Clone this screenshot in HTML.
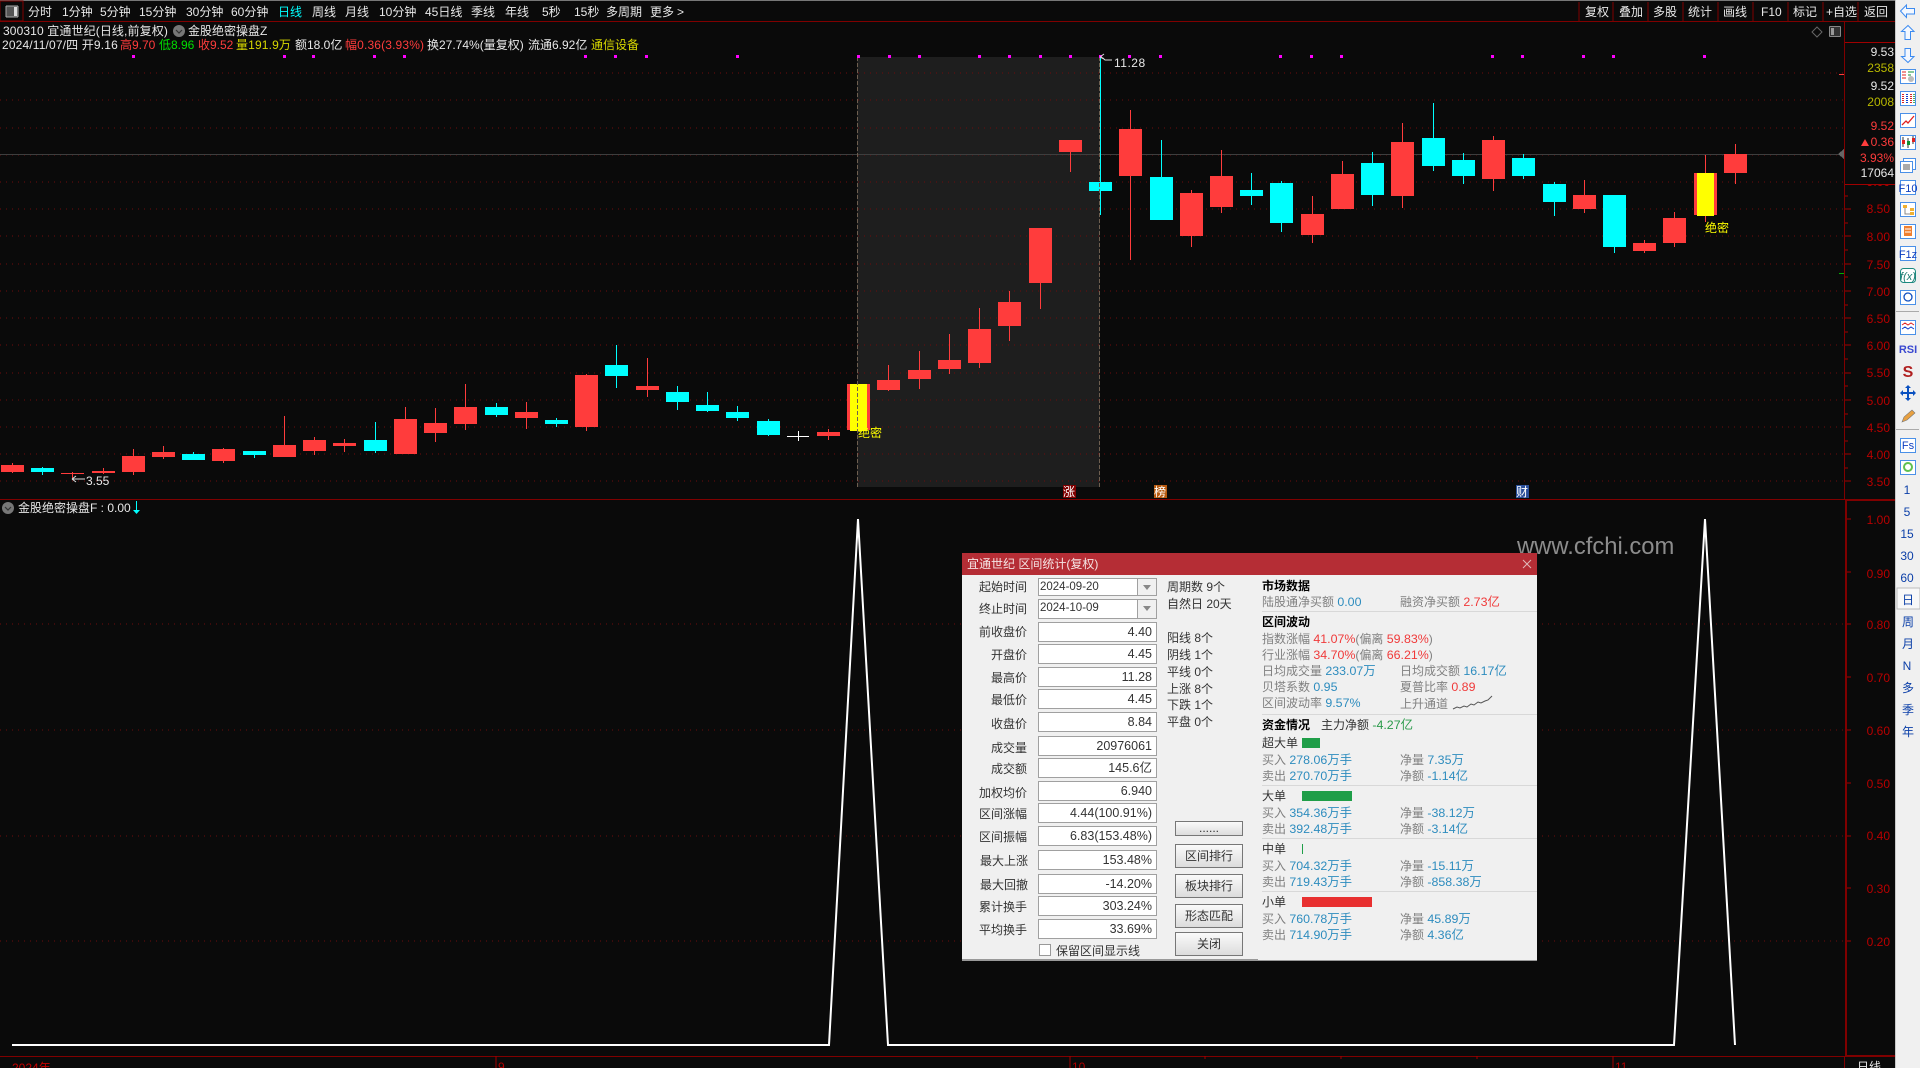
<!DOCTYPE html>
<html lang="zh"><head><meta charset="utf-8"><title>区间统计</title>
<style>
html,body{margin:0;padding:0;background:#0a0a0a;width:1920px;height:1068px;overflow:hidden}
#c{position:absolute;left:0;top:0}
#c text{font-family:"Liberation Sans","WenQuanYi Zen Hei","Noto Sans CJK SC",sans-serif;font-size:12px}
.w{fill:#e8e8e8}.r{fill:#ff3c3c}.g{fill:#00e000}.y{fill:#d8d800}
.ax text{fill:#b80000;text-anchor:end}
.ov text{text-anchor:end}
.m{text-anchor:middle}
.ls{letter-spacing:.15px}
.sb text{font-family:"Liberation Sans","Noto Sans CJK SC",sans-serif;font-size:13px;fill:#0b3fa8;text-anchor:middle}
#d{position:absolute;left:962px;top:553px;width:575px;height:408px;background:#f0f0f0;border-bottom:1px solid #999;box-sizing:border-box;font:12px/16px "Liberation Sans","Noto Sans CJK SC",sans-serif;color:#333;overflow:hidden}
#d div,#d span.a{position:absolute;white-space:nowrap}
.ttl{left:0;top:0;width:575px;height:22px;background:#b52d35;color:#f5e4e4;padding-left:5px;line-height:22px;box-sizing:border-box}
.l{width:80px;text-align:right;left:-15px}
.i{left:76px;width:119px;height:20px;background:#fff;border:1px solid #a0a0a0;box-sizing:border-box;text-align:right;padding-right:4px;line-height:19px;font-size:12.5px}
.cb{left:76px;width:119px;background:#fff;border:1px solid #a0a0a0;box-sizing:border-box;padding-left:1px;line-height:17px;font-size:11.5px}
.cb i{position:absolute;right:0;top:0;bottom:0;width:18px;border-left:1px solid #a0a0a0;background:#f0f0f0}
.cb i:after{content:"";position:absolute;left:5px;top:6px;border:4px solid transparent;border-top:5px solid #888}
.b{left:213px;width:68px;text-align:center;border:1px solid #777;box-sizing:border-box;background:linear-gradient(#fafafa,#dcdcdc)}
.h{left:300px;font-weight:bold;color:#000}
.k{color:#808080}.v{color:#2d8cbe;font-size:12.4px}.re{color:#f03a3a;font-size:12.4px}.gr{color:#2a9a4a;font-size:12.4px}
.s{left:300px;width:275px;height:1px;background:#d8d8d8}
.c2{left:438px}.c1{left:300px}
.bar{left:340px;height:10px}
</style></head><body>
<svg id="c" width="1920" height="1068" viewBox="0 0 1920 1068" shape-rendering="crispEdges">
<rect width="1920" height="1068" fill="#0a0a0a"/>
<rect width="1895" height="1" fill="#777"/>
<rect x="857" y="57" width="243" height="430" fill="#1e1e1e"/>
<path d="M0 73H1844M0 100H1844M0 128H1844M0 155H1844M0 182H1844M0 209H1844M0 236H1844M0 264H1844M0 291H1844M0 318H1844M0 345H1844M0 373H1844M0 400H1844M0 427H1844M0 454H1844M0 481H1844M0 624H1844M0 730H1844M0 836H1844M0 941H1844" stroke="#6e0c0c" stroke-width="1" stroke-dasharray="1 5" fill="none"/>
<rect x="0" y="154" width="1840" height="1" fill="#3e3e3e"/>
<path d="M1844 149l-6 5 6 5z" fill="#666"/>
<!-- frame -->
<rect y="21" width="1895" height="1" fill="#800000"/>
<rect y="499" width="1845" height="1" fill="#800000"/>
<rect y="1056" width="1895" height="1" fill="#800000"/>
<rect x="1844" y="21" width="1" height="478" fill="#800000"/>
<rect x="1845" y="499" width="2" height="558" fill="#800000"/>
<rect x="1845" y="499" width="50" height="2" fill="#800000"/>
<rect x="1845" y="1055" width="50" height="2" fill="#800000"/>
<rect x="1844" y="1057" width="1" height="11" fill="#800000"/>
<path d="M1845 73h6M1845 100h6M1845 128h6M1845 155h6M1845 182h6M1845 209h6M1845 236h6M1845 264h6M1845 291h6M1845 318h6M1845 345h6M1845 373h6M1845 400h6M1845 427h6M1845 454h6M1845 481h6M1845 196h3M1845 223h3M1845 250h3M1845 277h3M1845 305h3M1845 332h3M1845 359h3M1845 386h3M1845 414h3M1845 441h3M1845 468h3M1847 519h4M1847 572h4M1847 624h4M1847 677h4M1847 730h4M1847 783h4M1847 836h4M1847 888h4M1847 941h4" stroke="#a00000" stroke-width="1"/>
<rect x="1839" y="74" width="5" height="1" fill="#ff3c3c"/>
<rect x="1839" y="273" width="5" height="1" fill="#00b000"/>
<!-- candles -->
<path fill="#ff3c3c" d="M1 465h23v7h-23zM12 463h1v10h-1zM61 473h23v1h-23zM72 472h1v6h-1zM92 471h23v2h-23zM103 468h1v6h-1zM122 456h23v16h-23zM133 449h1v26h-1zM152 452h23v5h-23zM163 446h1v13h-1zM212 449h23v12h-23zM223 448h1v15h-1zM273 445h23v12h-23zM284 416h1v41h-1zM303 440h23v11h-23zM314 437h1v18h-1zM333 443h23v3h-23zM344 439h1v13h-1zM394 419h23v35h-23zM405 407h1v47h-1zM424 423h23v10h-23zM435 408h1v34h-1zM454 407h23v17h-23zM465 384h1v46h-1zM515 412h23v6h-23zM526 402h1v27h-1zM575 375h23v52h-23zM586 374h1v57h-1zM636 386h23v4h-23zM647 358h1v39h-1zM817 432h23v4h-23zM828 429h1v11h-1zM847 384h23v46h-23zM877 380h23v10h-23zM888 365h1v26h-1zM908 370h23v9h-23zM919 351h1v38h-1zM938 360h23v9h-23zM949 334h1v40h-1zM968 329h23v34h-23zM979 308h1v60h-1zM998 302h23v24h-23zM1009 291h1v50h-1zM1029 228h23v55h-23zM1040 283h1v26h-1zM1059 140h23v12h-23zM1070 152h1v20h-1zM1119 129h23v47h-23zM1130 110h1v150h-1zM1180 193h23v43h-23zM1191 190h1v57h-1zM1210 176h23v31h-23zM1221 150h1v63h-1zM1301 214h23v21h-23zM1312 196h1v47h-1zM1331 174h23v35h-23zM1342 161h1v48h-1zM1391 142h23v54h-23zM1402 123h1v85h-1zM1482 140h23v39h-23zM1493 136h1v55h-1zM1573 195h23v14h-23zM1584 180h1v33h-1zM1633 243h23v8h-23zM1644 240h1v13h-1zM1663 218h23v25h-23zM1674 212h1v35h-1zM1694 173h23v42h-23zM1705 155h1v67h-1zM1724 154h23v19h-23zM1735 144h1v40h-1z"/>
<path fill="#00ffff" d="M31 468h23v4h-23zM42 467h1v8h-1zM182 454h23v6h-23zM193 452h1v8h-1zM243 451h23v4h-23zM254 451h1v7h-1zM364 440h23v11h-23zM375 422h1v31h-1zM485 407h23v8h-23zM496 403h1v14h-1zM545 420h23v4h-23zM556 418h1v9h-1zM605 365h23v11h-23zM616 345h1v43h-1zM666 392h23v10h-23zM677 386h1v24h-1zM696 405h23v6h-23zM707 392h1v20h-1zM726 412h23v6h-23zM737 406h1v15h-1zM757 421h23v14h-23zM768 419h1v17h-1zM1089 182h23v9h-23zM1100 56h1v159h-1zM1150 177h23v43h-23zM1161 140h1v80h-1zM1240 190h23v6h-23zM1251 173h1v32h-1zM1270 183h23v40h-23zM1281 181h1v51h-1zM1361 163h23v32h-23zM1372 152h1v54h-1zM1422 138h23v28h-23zM1433 103h1v68h-1zM1452 160h23v16h-23zM1463 153h1v31h-1zM1512 158h23v18h-23zM1523 154h1v25h-1zM1543 184h23v18h-23zM1554 182h1v34h-1zM1603 195h23v52h-23zM1614 247h1v6h-1z"/>
<path fill="#fff" d="M787 436h22v1h-22zM798 431h1v10h-1z"/>
<path fill="#ffff00" d="M850 384h17v47h-17zM1697 173h17v43h-17z"/>
<path d="M857.5 57V487M1099.5 57V487" stroke="#6e5f50" stroke-width="1" stroke-dasharray="4 2" fill="none"/>
<!-- magenta dots -->
<path fill="#ff00ff" d="M132 55h3v3h-3zM283 55h3v3h-3zM312 55h3v3h-3zM373 55h3v3h-3zM403 55h3v3h-3zM584 55h3v3h-3zM614 55h3v3h-3zM645 55h3v3h-3zM736 55h3v3h-3zM857 55h3v3h-3zM888 55h3v3h-3zM918 55h3v3h-3zM978 55h3v3h-3zM1008 55h3v3h-3zM1039 55h3v3h-3zM1069 55h3v3h-3zM1099 55h3v3h-3zM1128 55h3v3h-3zM1159 55h3v3h-3zM1279 55h3v3h-3zM1310 55h3v3h-3zM1340 55h3v3h-3zM1491 55h3v3h-3zM1521 55h3v3h-3zM1582 55h3v3h-3zM1612 55h3v3h-3zM1703 55h3v3h-3z"/>
<!-- toolbar -->
<rect x="0" y="1" width="23" height="20" fill="none" stroke="#800000"/>
<rect x="6" y="6" width="12" height="11" rx="1" fill="#555" stroke="#aaa"/><rect x="14" y="7" width="3" height="9" fill="#ddd"/>
<g class="w">
<text x="28" y="16">分时</text><text x="62" y="16">1分钟</text><text x="100" y="16">5分钟</text><text x="139" y="16">15分钟</text><text x="186" y="16">30分钟</text><text x="231" y="16">60分钟</text><text x="278" y="16" style="fill:#00ffff">日线</text><text x="312" y="16">周线</text><text x="345" y="16">月线</text><text x="379" y="16">10分钟</text><text x="425" y="16">45日线</text><text x="471" y="16">季线</text><text x="505" y="16">年线</text><text x="542" y="16">5秒</text><text x="574" y="16">15秒</text><text x="606" y="16">多周期</text><text x="650" y="16">更多</text><text x="677" y="16">&gt;</text>
<text x="1585" y="16">复权</text><text x="1619" y="16">叠加</text><text x="1653" y="16">多股</text><text x="1688" y="16">统计</text><text x="1723" y="16">画线</text><text x="1761" y="16">F10</text><text x="1793" y="16">标记</text><text x="1826" y="16">+自选</text><text x="1864" y="16">返回</text>
</g>
<path d="M1579 2v19M1613 2v19M1648 2v19M1683 2v19M1718 2v19M1753 2v19M1788 2v19M1823 2v19M1858 2v19" stroke="#800000" stroke-width="1"/>
<!-- info -->
<text x="3" y="35" class="w" style="letter-spacing:.12px">300310 宜通世纪(日线,前复权)</text>
<circle cx="179" cy="31" r="6" fill="#777" shape-rendering="auto"/><path d="M176 30l3 3 3-3" stroke="#333" fill="none" stroke-width="1.2" shape-rendering="auto"/>
<text x="188" y="35" class="w">金股绝密操盘Z</text>
<text x="2" y="49" class="w ls">2024/11/07/四 开9.16</text>
<text x="120" y="49" class="r">高9.70</text><text x="159" y="49" class="g">低8.96</text><text x="198" y="49" class="r">收9.52</text><text x="236" y="49" class="y ls">量191.9万</text><text x="295" y="49" class="w">额18.0亿</text><text x="345" y="49" class="r ls">幅0.36(3.93%)</text><text x="427" y="49" class="w">换27.74%(量复权)</text><text x="528" y="49" class="w">流通6.92亿</text><text x="591" y="49" class="y">通信设备</text>
<path d="M1817 27l5 5-5 5-5-5z" fill="none" stroke="#666" shape-rendering="auto"/>
<rect x="1829.500" y="26.500" width="11" height="10" rx="1" fill="#333" stroke="#888"/><rect x="1831" y="28" width="3" height="7" fill="#999"/>
<!-- axis -->
<g class="ax">
<text x="1890" y="186">9.00</text><text x="1890" y="213">8.50</text><text x="1890" y="241">8.00</text><text x="1890" y="269">7.50</text><text x="1890" y="296">7.00</text><text x="1890" y="323">6.50</text><text x="1890" y="350">6.00</text><text x="1890" y="377">5.50</text><text x="1890" y="405">5.00</text><text x="1890" y="432">4.50</text><text x="1890" y="459">4.00</text><text x="1890" y="486">3.50</text>
<text x="1890" y="524">1.00</text><text x="1890" y="578">0.90</text><text x="1890" y="629">0.80</text><text x="1890" y="682">0.70</text><text x="1890" y="735">0.60</text><text x="1890" y="788">0.50</text><text x="1890" y="840">0.40</text><text x="1890" y="893">0.30</text><text x="1890" y="946">0.20</text>
</g>
<rect x="1845" y="43" width="50" height="141" fill="#0a0a0a"/>
<rect x="1845" y="42" width="50" height="1" fill="#a00000"/><rect x="1845" y="184" width="50" height="1" fill="#a00000"/>
<g class="ov">
<text x="1894" y="56" class="w">9.53</text><text x="1894" y="72" fill="#b8b800">2358</text><text x="1894" y="90" class="w">9.52</text><text x="1894" y="106" fill="#b8b800">2008</text><text x="1894" y="130" class="r">9.52</text><text x="1894" y="146" class="r">0.36</text><text x="1894" y="162" class="r">3.93%</text><text x="1894" y="177" class="w">17064</text>
</g>
<path d="M1861 146l4-7 4 7z" fill="#ff3c3c" shape-rendering="auto"/>
<!-- marks -->
<path d="M1112 60h-7l-2-2-3-1M1100 57l4-3M1100 57l4 2" stroke="#ddd" fill="none" shape-rendering="auto"/>
<text x="1114" y="67" class="w" style="letter-spacing:.5px">11.28</text>
<path d="M85 479H72M72 479l4-3M72 479l4 3" stroke="#ddd" fill="none" shape-rendering="auto"/>
<text x="86" y="485" class="w">3.55</text>
<text x="858" y="437" fill="#ffff00">绝密</text><text x="1705" y="232" fill="#ffff00">绝密</text>
<rect x="1063" y="485" width="13" height="13" fill="#800000"/><text x="1063" y="496" fill="#fff">涨</text>
<rect x="1154" y="485" width="13" height="13" fill="#b85a10"/><text x="1154" y="496" fill="#fff">榜</text>
<rect x="1516" y="485" width="13" height="13" fill="#2a4f9a"/><text x="1516" y="496" fill="#fff">财</text>
<!-- lower pane -->
<circle cx="8" cy="508" r="6" fill="#777" shape-rendering="auto"/><path d="M5 507l3 3 3-3" stroke="#333" fill="none" stroke-width="1.2" shape-rendering="auto"/>
<text x="18" y="512" class="w">金股绝密操盘F : 0.00</text>
<path d="M136.500 501v10" stroke="#0ff"/><path d="M133 510h7l-3.500 4z" fill="#0ff" shape-rendering="auto"/>
<polyline points="12,1045 829,1045 858,519 888,1045 1674,1045 1705,519 1735,1045" fill="none" stroke="#fff" stroke-width="2" shape-rendering="auto"/>
<text x="1517" y="554" style="font-size:23.8px;font-family:'Liberation Sans',sans-serif" fill="#8c8c8c" shape-rendering="auto">www.cfchi.com</text>
<!-- time axis -->
<path d="M496 1056v12M1070 1056v12M1613 1056v12M1205 1056v3M1341 1056v3M1477 1056v3" stroke="#a00000"/>
<text x="12" y="1072" fill="#c80000">2024年</text><text x="498" y="1071" fill="#b00000">9</text><text x="1072" y="1071" fill="#b00000">10</text><text x="1615" y="1071" fill="#b00000">11</text>
<text x="1857" y="1071" class="w">日线</text>
<!-- sidebar -->
<rect x="1895" y="0" width="25" height="1068" fill="#f0f0f0"/>
<rect x="1895" y="0" width="1" height="1068" fill="#c8c8c8"/>
<g shape-rendering="auto">
<path d="M1900.500 11l6-6v3.500h8v5.500h-8v3.500z M1908 25.500l6 6h-3.500v8h-5.500v-8h-3.500z M1908 62.500l6-6h-3.500v-8h-5.500v8h-3.500z" fill="#f4f8ff" stroke="#3d8bf0"/>
<g fill="#fff" stroke="#4a90e8">
<rect x="1900.500" y="69.500" width="15" height="14"/><rect x="1900.500" y="91.500" width="15" height="14"/><rect x="1900.500" y="113.500" width="15" height="14"/><rect x="1900.500" y="135.500" width="15" height="14"/>
<rect x="1903.500" y="158.500" width="12" height="11"/><rect x="1900.500" y="161.500" width="12" height="11"/>
<rect x="1900.500" y="180.500" width="15" height="14"/><rect x="1900.500" y="202.500" width="15" height="14"/><rect x="1900.500" y="224.500" width="15" height="14"/><rect x="1900.500" y="246.500" width="15" height="14"/>
<rect x="1900.500" y="290.500" width="15" height="14"/><rect x="1900.500" y="320.500" width="15" height="14"/><rect x="1900.500" y="438.500" width="15" height="14"/><rect x="1900.500" y="460.500" width="15" height="14"/>
</g>
<rect x="1900.500" y="268.500" width="15" height="14" rx="3" fill="#fff" stroke="#1a8a80"/>
<path d="M1902 72h4M1902 75h4M1902 78h4" stroke="#e02020"/><path d="M1908 72h6M1908 75h3" stroke="#109030"/><circle cx="1911" cy="79" r="3" fill="#bbb"/>
<path d="M1903 94v9" stroke="#e02020" stroke-width="2" stroke-dasharray="1 1"/><path d="M1907 94v9" stroke="#1040d0" stroke-width="2" stroke-dasharray="1 1"/><path d="M1911 94v9" stroke="#e02020" stroke-width="2" stroke-dasharray="1 1"/><path d="M1914 94v9" stroke="#109030" stroke-width="1.500" stroke-dasharray="1 1"/>
<path d="M1902 125l4-4 2 2 6-7" stroke="#e02020" fill="none" stroke-width="1.300"/>
<path d="M1903 137v10M1908 138v10M1913 136v8" stroke="#333"/><path d="M1902 140h3v4h-3zM1912 138h3v4h-3z" fill="#e02020"/><path d="M1907 141h3v4h-3z" fill="#109030"/>
<path d="M1903 165h7M1903 167h7M1903 169h7" stroke="#555"/>
<text x="1908" y="192" class="m" style="fill:#1040c0;font-size:11px">F10</text>
<path d="M1903 205h4v3h-4zM1910 208h4v3h-4zM1910 212h4v3h-4z" fill="#f0b030"/><path d="M1905 208v6h5" stroke="#888" fill="none"/>
<rect x="1904" y="226" width="8" height="10" fill="#f08030"/><path d="M1905 229h6M1905 232h6" stroke="#fff"/>
<text x="1908" y="258" class="m" style="fill:#1040c0;font-size:11px">F1z</text>
<text x="1908" y="280" class="m" style="fill:#1a7a70;font-size:11px;font-style:italic">f(x)</text>
<circle cx="1908" cy="297" r="4" fill="none" stroke="#1050c0" stroke-width="1.300"/>
<rect x="1896" y="311" width="23" height="1" fill="#aaa"/>
<path d="M1902 325l3-2 3 2 3-2 3 2" stroke="#e02020" fill="none"/><path d="M1902 329l3-2 3 2 3-2 3 2" stroke="#1040d0" fill="none"/>
<text x="1908" y="353" class="m" style="fill:#3a48d0;font-size:11px;font-weight:bold">RSI</text>
<text x="1908" y="377" class="m" style="fill:#b02020;font-size:16px;font-weight:bold;font-family:'Liberation Sans',sans-serif">S</text>
<path d="M1908 385l3 3h-2v4h4v-2l3 3-3 3v-2h-4v4h2l-3 3-3-3h2v-4h-4v2l-3-3 3-3v2h4v-4h-2z" fill="#0a50c0"/>
<path d="M1902 422l2-5 8-7 3 3-8 7z" fill="#e8a040" stroke="#777" stroke-width=".6"/>
<rect x="1896" y="429" width="23" height="1" fill="#aaa"/>
<text x="1908" y="449" class="m" style="fill:#1040c0;font-size:11px">Fs</text>
<circle cx="1908" cy="467" r="4" fill="none" stroke="#60c050" stroke-width="2"/>
<rect x="1897" y="588" width="23" height="21" fill="#f8f8f8" stroke="#bbb"/>
</g>
<g class="sb">
<text x="1907" y="494">1</text><text x="1907" y="516">5</text><text x="1907" y="538">15</text><text x="1907" y="560">30</text><text x="1907" y="582">60</text><text x="1908" y="604">日</text><text x="1908" y="626">周</text><text x="1908" y="648">月</text><text x="1907" y="670">N</text><text x="1908" y="692">多</text><text x="1908" y="714">季</text><text x="1908" y="736">年</text>
</g>
</svg>

<div id="d">
<div class="ttl">宜通世纪 区间统计(复权)</div>
<svg style="position:absolute;left:560px;top:6px" width="10" height="10"><path d="M1 1l8 8M9 1l-8 8" stroke="#e0b8b8" fill="none"/></svg>
<div class="l" style="top:26px">起始时间</div><div class="cb" style="top:25px;height:18px">2024-09-20<i></i></div>
<div class="l" style="top:48px">终止时间</div><div class="cb" style="top:46px;height:20px">2024-10-09<i></i></div>
<div class="l" style="top:71px">前收盘价</div><div class="i" style="top:69px">4.40</div>
<div class="l" style="top:94px">开盘价</div><div class="i" style="top:91px">4.45</div>
<div class="l" style="top:117px">最高价</div><div class="i" style="top:114px">11.28</div>
<div class="l" style="top:139px">最低价</div><div class="i" style="top:136px">4.45</div>
<div class="l" style="top:163px">收盘价</div><div class="i" style="top:159px">8.84</div>
<div class="l" style="top:187px">成交量</div><div class="i" style="top:183px">20976061</div>
<div class="l" style="top:208px">成交额</div><div class="i" style="top:205px">145.6亿</div>
<div class="l" style="top:232px">加权均价</div><div class="i" style="top:228px">6.940</div>
<div class="l" style="top:253px">区间涨幅</div><div class="i" style="top:250px">4.44(100.91%)</div>
<div class="l" style="top:276px">区间振幅</div><div class="i" style="top:273px">6.83(153.48%)</div>
<div class="l" style="top:300px;left:-14px">最大上涨</div><div class="i" style="top:297px">153.48%</div>
<div class="l" style="top:324px;left:-14px">最大回撤</div><div class="i" style="top:321px">-14.20%</div>
<div class="l" style="top:346px">累计换手</div><div class="i" style="top:343px">303.24%</div>
<div class="l" style="top:369px">平均换手</div><div class="i" style="top:366px">33.69%</div>
<div style="left:77px;top:391px;width:12px;height:12px;background:#fff;border:1px solid #999;box-sizing:border-box"></div>
<div style="left:94px;top:390px">保留区间显示线</div>
<div style="left:205px;top:26px">周期数 9个</div><div style="left:205px;top:43px">自然日 20天</div>
<div style="left:205px;top:77px">阳线 8个</div><div style="left:205px;top:94px">阴线 1个</div><div style="left:205px;top:111px">平线 0个</div><div style="left:205px;top:128px">上涨 8个</div><div style="left:205px;top:144px">下跌 1个</div><div style="left:205px;top:161px">平盘 0个</div>
<div class="b" style="top:268px;height:15px;line-height:12px">......</div>
<div class="b" style="top:291px;height:24px;line-height:22px">区间排行</div>
<div class="b" style="top:321px;height:24px;line-height:22px">板块排行</div>
<div class="b" style="top:351px;height:24px;line-height:22px">形态匹配</div>
<div class="b" style="top:379px;height:24px;line-height:22px">关闭</div>

<div class="h" style="top:25px">市场数据</div>
<div class="c1 k" style="top:41px">陆股通净买额 <span class="v">0.00</span></div><div class="c2 k" style="top:41px">融资净买额 <span class="re">2.73亿</span></div>
<div class="s" style="top:58px"></div>
<div class="h" style="top:61px">区间波动</div>
<div class="c1 k" style="top:78px">指数涨幅 <span class="re">41.07%</span>(偏离 <span class="re">59.83%</span>)</div>
<div class="c1 k" style="top:94px">行业涨幅 <span class="re">34.70%</span>(偏离 <span class="re">66.21%</span>)</div>
<div class="c1 k" style="top:110px">日均成交量 <span class="v">233.07万</span></div><div class="c2 k" style="top:110px">日均成交额 <span class="v">16.17亿</span></div>
<div class="c1 k" style="top:126px">贝塔系数 <span class="v">0.95</span></div><div class="c2 k" style="top:126px">夏普比率 <span class="re">0.89</span></div>
<div class="c1 k" style="top:142px">区间波动率 <span class="v">9.57%</span></div><div class="c2 k" style="top:143px">上升通道</div>
<svg style="position:absolute;left:490px;top:142px" width="42" height="16"><polyline points="1,14 5,12 8,13 12,11 15,12 19,9 22,10 26,7 29,8 33,6 36,5 40,1" fill="none" stroke="#555"/></svg>
<div class="s" style="top:161px"></div>
<div class="h" style="top:164px">资金情况</div><div style="left:359px;top:164px">主力净额 <span class="gr">-4.27亿</span></div>
<div class="c1" style="top:182px">超大单</div><div class="bar" style="top:185px;width:18px;background:#1f9e48"></div>
<div class="c1 k" style="top:199px">买入 <span class="v">278.06万手</span></div><div class="c2 k" style="top:199px">净量 <span class="v">7.35万</span></div>
<div class="c1 k" style="top:215px">卖出 <span class="v">270.70万手</span></div><div class="c2 k" style="top:215px">净额 <span class="v">-1.14亿</span></div>
<div class="s" style="top:232px"></div>
<div class="c1" style="top:235px">大单</div><div class="bar" style="top:238px;width:50px;background:#1f9e48"></div>
<div class="c1 k" style="top:252px">买入 <span class="v">354.36万手</span></div><div class="c2 k" style="top:252px">净量 <span class="v">-38.12万</span></div>
<div class="c1 k" style="top:268px">卖出 <span class="v">392.48万手</span></div><div class="c2 k" style="top:268px">净额 <span class="v">-3.14亿</span></div>
<div class="s" style="top:285px"></div>
<div class="c1" style="top:288px">中单</div><div class="bar" style="top:291px;width:1px;background:#1f9e48"></div>
<div class="c1 k" style="top:305px">买入 <span class="v">704.32万手</span></div><div class="c2 k" style="top:305px">净量 <span class="v">-15.11万</span></div>
<div class="c1 k" style="top:321px">卖出 <span class="v">719.43万手</span></div><div class="c2 k" style="top:321px">净额 <span class="v">-858.38万</span></div>
<div class="s" style="top:338px"></div>
<div class="c1" style="top:341px">小单</div><div class="bar" style="top:344px;width:70px;background:#e83030"></div>
<div class="c1 k" style="top:358px">买入 <span class="v">760.78万手</span></div><div class="c2 k" style="top:358px">净量 <span class="v">45.89万</span></div>
<div class="c1 k" style="top:374px">卖出 <span class="v">714.90万手</span></div><div class="c2 k" style="top:374px">净额 <span class="v">4.36亿</span></div>
<div style="left:0;top:406px;width:296px;height:1px;background:#999"></div>
</div>
</body></html>
